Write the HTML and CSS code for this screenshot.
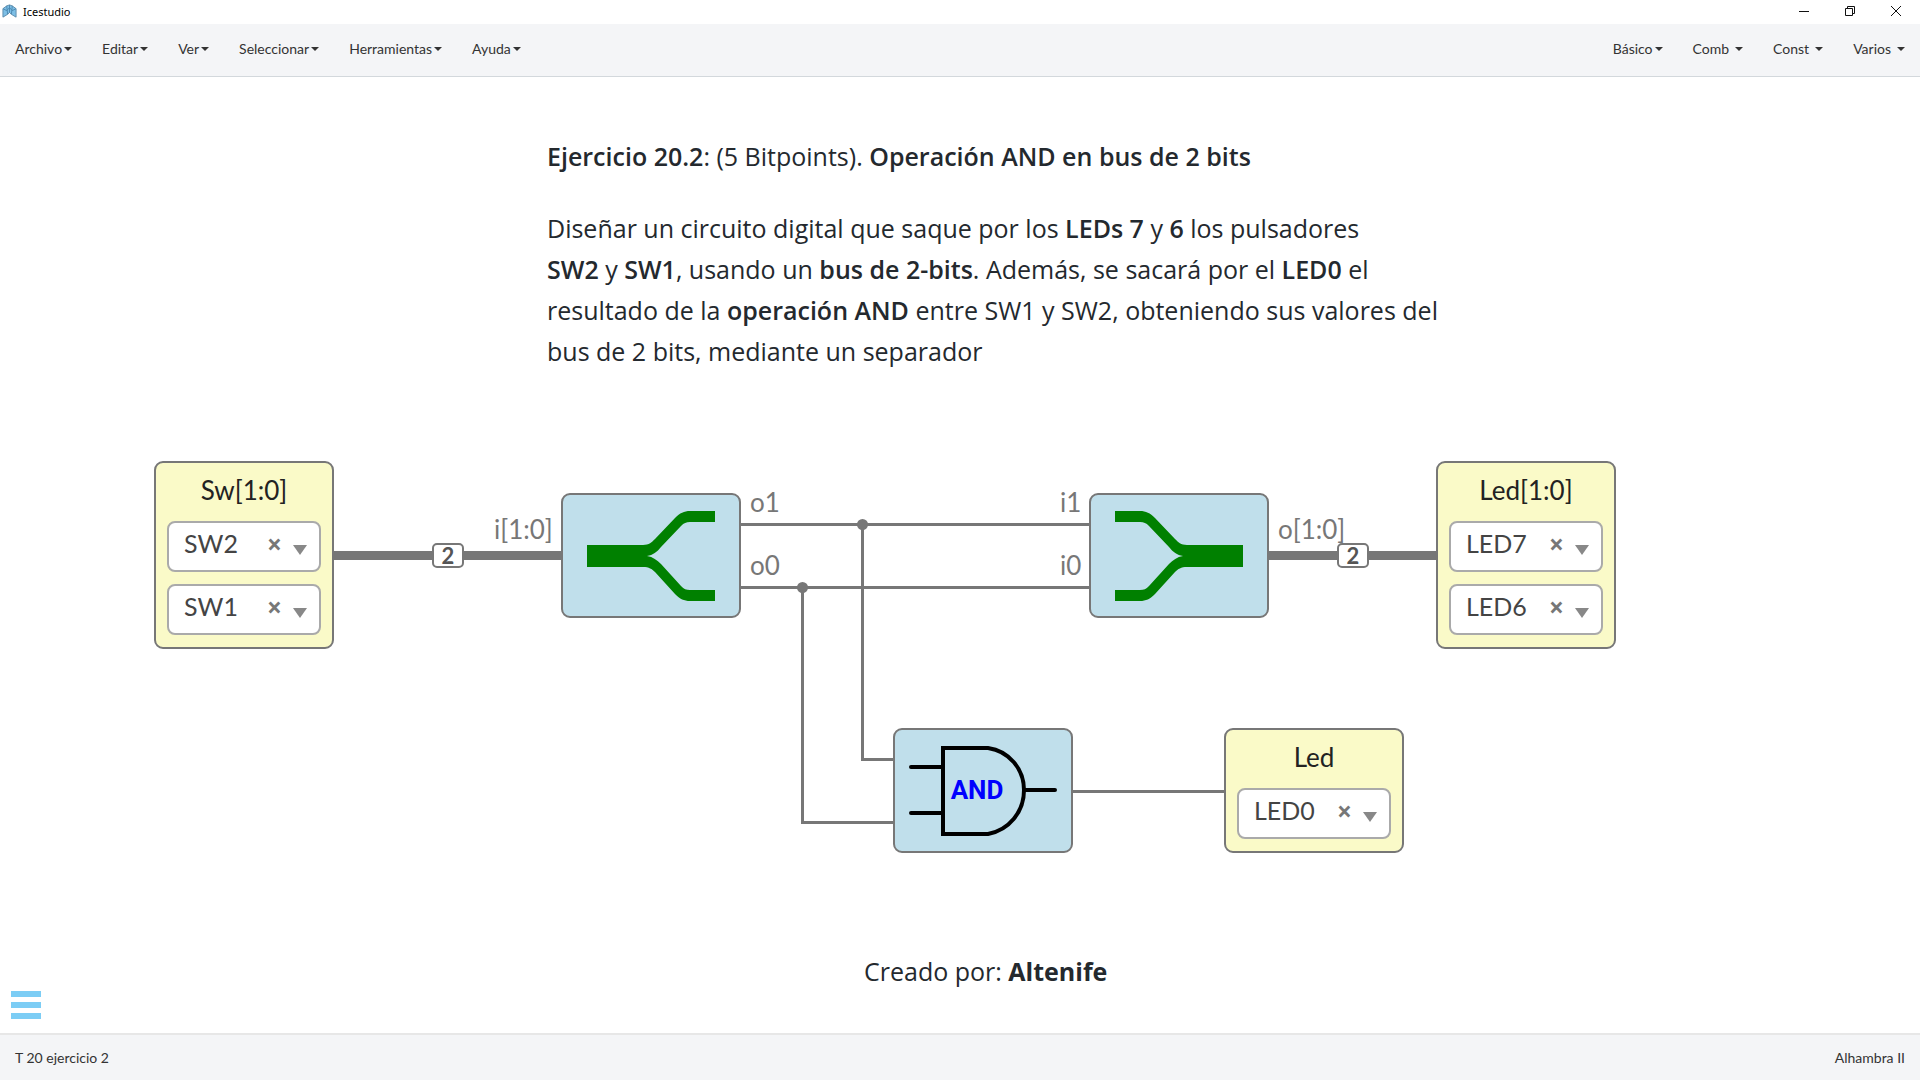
FILE: index.html
```html
<!DOCTYPE html>
<html lang="es">
<head>
<meta charset="utf-8">
<title>Icestudio</title>
<link rel="stylesheet" href="styles.css">
</head>
<body>
<header class="titlebar">
  <svg class="logo" viewBox="0 0 16 16" aria-hidden="true">
    <path d="M1 5 5 2 8 1 11 2 15 5V14L10 11 8 9 6 11 1 14Z" fill="#7dbfe6" stroke="#5d8cab"/>
    <path d="M5 2 6 11M11 2 10 11M8 1V9M1 5 5 7 8 4 11 7 15 5" fill="none" stroke="#4b88b0"/>
  </svg>
  <span class="app-name">Icestudio</span>
  <div class="window-buttons">
    <button type="button" aria-label="Minimizar"><svg viewBox="0 0 12 12"><path d="M1 6.500H11" /></svg></button>
    <button type="button" aria-label="Restaurar"><svg viewBox="0 0 12 12"><path d="M1.500 3.500H8.500V10.500H1.500ZM3.500 3V1.500H10.500V8.500H9"/></svg></button>
    <button type="button" aria-label="Cerrar"><svg viewBox="0 0 12 12"><path d="M1 1 11 11M11 1 1 11"/></svg></button>
  </div>
</header>

<nav class="menubar">
  <div class="menu">
    <a href="#">Archivo</a><a href="#">Editar</a><a href="#">Ver</a><a href="#">Seleccionar</a><a href="#">Herramientas</a><a href="#">Ayuda</a>
  </div>
  <div class="menu">
    <a href="#">Básico</a><a href="#" class="wide">Comb</a><a href="#" class="wide">Const</a><a href="#" class="wide">Varios</a>
  </div>
</nav>

<main class="canvas">
  <svg class="wires" aria-hidden="true">
    <rect x="334" y="474" width="227" height="9"/>
    <rect x="1269" y="474" width="167" height="9"/>
    <rect x="741" y="446" width="348" height="3"/>
    <rect x="741" y="509" width="348" height="3"/>
    <rect x="861" y="447" width="3" height="237"/>
    <rect x="861" y="681" width="32" height="3"/>
    <rect x="801" y="510" width="3" height="237"/>
    <rect x="801" y="744" width="92" height="3"/>
    <rect x="1073" y="713" width="151" height="3"/>
    <circle cx="862.500" cy="447.500" r="5.500"/>
    <circle cx="802.500" cy="510.500" r="5.500"/>
  </svg>

  <article class="node note statement">
    <p><b>Ejercicio 20.2</b>: (5 Bitpoints). <b>Operación AND en bus de 2 bits</b></p>
    <p>Diseñar un circuito digital que saque por los <b>LEDs 7</b> y <b>6</b> los pulsadores<br>
    <b>SW2</b> y <b>SW1</b>, usando un <b>bus de 2-bits</b>. Además, se sacará por el <b>LED0</b> el<br>
    resultado de la <b>operación AND</b> entre SW1 y SW2, obteniendo sus valores del<br>
    bus de 2 bits, mediante un separador</p>
  </article>

  <section class="node io sw-bus">
    <h2>Sw[1:0]</h2>
    <div class="pin"><select aria-label="Sw 1"><option>SW2</option></select><button type="button" aria-label="Quitar">×</button><i class="arrow"></i></div>
    <div class="pin"><select aria-label="Sw 0"><option>SW1</option></select><button type="button" aria-label="Quitar">×</button><i class="arrow"></i></div>
  </section>

  <section class="node block splitter">
    <svg viewBox="0 0 128 90" role="img" aria-label="Separador">
      <path d="M0 34H56C62 34 65 31 68 28L88 7C93 2 97 0 103 0H128V11H103C99 11 97 12 94 15L74 36C70 41 66 44 60 45C66 46 70 49 74 53L94 75C97 78 99 79 103 79H128V90H103C97 90 93 88 88 83L68 61C65 58 62 56 56 56H0Z"/>
    </svg>
  </section>

  <section class="node block joiner">
    <svg viewBox="0 0 128 90" role="img" aria-label="Agregador">
      <path transform="matrix(-1 0 0 1 128 0)" d="M0 34H56C62 34 65 31 68 28L88 7C93 2 97 0 103 0H128V11H103C99 11 97 12 94 15L74 36C70 41 66 44 60 45C66 46 70 49 74 53L94 75C97 78 99 79 103 79H128V90H103C97 90 93 88 88 83L68 61C65 58 62 56 56 56H0Z"/>
    </svg>
  </section>

  <section class="node block and-gate">
    <svg viewBox="0 0 150 92" role="img" aria-label="AND">
      <path class="gate" d="M35 3H80C101 6 116 24 116 45C116 67 101 85 80 89H35ZM3 22H35M3 68H35M116 45H147"/>
      <text x="69" y="54">AND</text>
    </svg>
  </section>

  <section class="node io led-bus">
    <h2>Led[1:0]</h2>
    <div class="pin"><select aria-label="Led 1"><option>LED7</option></select><button type="button" aria-label="Quitar">×</button><i class="arrow"></i></div>
    <div class="pin"><select aria-label="Led 0"><option>LED6</option></select><button type="button" aria-label="Quitar">×</button><i class="arrow"></i></div>
  </section>

  <section class="node io led">
    <h2>Led</h2>
    <div class="pin"><select aria-label="Led"><option>LED0</option></select><button type="button" aria-label="Quitar">×</button><i class="arrow"></i></div>
  </section>

  <span class="node port port-i">i[1:0]</span>
  <span class="node port port-o1">o1</span>
  <span class="node port port-o0">o0</span>
  <span class="node port port-i1">i1</span>
  <span class="node port port-i0">i0</span>
  <span class="node port port-o">o[1:0]</span>
  <span class="node size size-in">2</span>
  <span class="node size size-out">2</span>

  <p class="node note author">Creado por: <b>Altenife</b></p>

  <button type="button" class="toggle" aria-label="Menú"><i></i><i></i><i></i></button>
</main>

<footer class="statusbar">
  <span>T 20 ejercicio 2</span>
  <span>Alhambra II</span>
</footer>
</body>
</html>
```
FILE: styles.css
```css
* { box-sizing: border-box; }
body {
  margin: 0;
  min-height: 100vh;
  display: flex;
  flex-direction: column;
  background: #fff;
  color: #333;
  font: 14px/20px Lato, sans-serif;
}
button { padding: 0; border: 0; background: none; color: inherit; font: inherit; }
h2, p { margin: 0; font-weight: 400; }

.titlebar { display: flex; align-items: center; height: 24px; padding: 0 2px 2px; }
.logo { width: 15px; height: 15px; margin-right: 6px; }
.app-name { padding-top: 2px; color: #000; font: 11px/20px "Noto Sans", sans-serif; }
.window-buttons { display: flex; gap: 1px; margin-left: auto; }
.window-buttons button { display: grid; place-items: center; width: 45px; height: 20px; }
.window-buttons svg { width: 12px; height: 12px; fill: none; stroke: #111; }

.menubar {
  display: flex;
  justify-content: space-between;
  height: 53px;
  background: #f4f5f7;
  border-bottom: 1px solid #d3d8dc;
}
.menu { display: flex; }
.menu a {
  display: flex;
  align-items: center;
  gap: 2px;
  padding: 0 15px 2px;
  color: #333;
  text-decoration: none;
}
.menu .wide { gap: 6px; }
.menu a::after { content: ""; border: 4px solid transparent; border-top-color: #333; border-bottom: 0; }

.canvas { position: relative; flex: 1; min-height: 900px; overflow: hidden; }
.wires { position: absolute; inset: 0; width: 100%; height: 100%; fill: #777; }
.node { position: absolute; }

.note { color: #24292e; font: 25px/41px "Open Sans", sans-serif; white-space: nowrap; }
.note b { font-weight: 600; }
.statement { left: 547px; top: 59px; }
.statement p + p { margin-top: 31px; }
.author { left: 864px; top: 874px; }
.author b { font-weight: 700; }

.io {
  display: flex;
  flex-direction: column;
  gap: 12px;
  width: 180px;
  padding: 10px 11px 12px;
  background: #fafac8;
  border: 2px solid #777;
  border-radius: 9px;
}
.io h2 { margin-bottom: 1px; color: #222; font-size: 26px; line-height: 35px; text-align: center; }
.pin {
  display: flex;
  align-items: center;
  height: 51px;
  padding: 0 12px 0 15px;
  background: #fff;
  border: 2px solid #aaa;
  border-radius: 8px;
}
.pin select {
  flex: 1;
  min-width: 0;
  height: 36px;
  margin-bottom: 8px;
  padding: 0;
  appearance: none;
  background: none;
  border: 0;
  color: #444;
  font: 25px/36px Lato, sans-serif;
}
.pin button { width: 14px; margin-bottom: 6px; margin-right: 12px; color: #777; font: 700 26px/20px "Open Sans", sans-serif; }
.arrow { margin-top: 6px; border: 7px solid transparent; border-top: 10px solid #888; border-bottom: 0; }
.sw-bus { left: 154px; top: 384px; }
.led-bus { left: 1436px; top: 384px; }
.led { left: 1224px; top: 651px; }

.block {
  display: grid;
  place-items: center;
  width: 180px;
  height: 125px;
  background: #c0dfeb;
  border: 2px solid #777;
  border-radius: 9px;
}
.block svg { width: 128px; height: 90px; fill: green; }
.splitter { left: 561px; top: 416px; }
.joiner { left: 1089px; top: 416px; }
.and-gate { left: 893px; top: 651px; }
.and-gate svg { width: 150px; height: 92px; }
.gate { fill: none; stroke: #000; stroke-width: 4; stroke-linecap: round; }
.and-gate text { fill: #00f; font: 700 26px Roboto, sans-serif; text-anchor: middle; }

.port { color: #777; font-size: 26px; line-height: 32px; }
.port-i { left: 494px; top: 436px; }
.port-o1 { left: 750px; top: 409px; }
.port-o0 { left: 750px; top: 472px; }
.port-i1 { left: 1060px; top: 409px; }
.port-i0 { left: 1060px; top: 472px; }
.port-o { left: 1278px; top: 436px; }
.size {
  width: 32px;
  height: 25px;
  background: #fff;
  border: 2px solid #777;
  border-radius: 5px;
  color: #555;
  font-size: 22px;
  font-weight: 700;
  line-height: 21px;
  text-align: center;
}
.size-in { left: 432px; top: 466px; }
.size-out { left: 1337px; top: 466px; }

.toggle { position: absolute; left: 11px; bottom: 14px; display: grid; gap: 5px; width: 30px; }
.toggle i { height: 6px; background: #7ccdf5; }

.statusbar {
  display: flex;
  justify-content: space-between;
  align-items: center;
  height: 47px;
  padding: 0 15px;
  background: #f4f5f7;
  border-top: 2px solid #e7e7e7;
}
```
